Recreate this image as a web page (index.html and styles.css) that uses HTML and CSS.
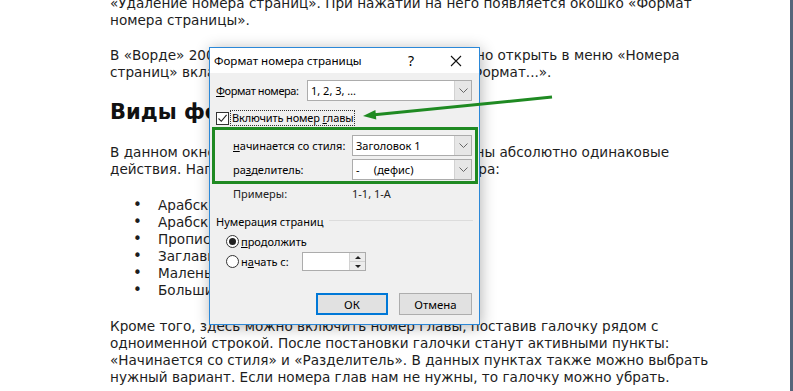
FILE: index.html
```html
<!DOCTYPE html>
<html lang="ru">
<head>
  <meta charset="UTF-8" />
  <title>Формат номера страницы</title>
  <link rel="stylesheet" href="styles.css">
</head>
<body>

  <!-- Текст статьи -->
  <div class="window">
    <main class="article">
      <p class="first">«Удаление номера страниц». При нажатии на него появляется окошко «Формат<br>номера страницы».</p>
      <p>В «Ворде» 2007 и 2010 это окно точно так же можно открыть в меню «Номера<br>страниц» вкладки «Вставка», выбрав там пункт «Формат...».</p>
      <h2>Виды форматов</h2>
      <p>В данном окне для всех форматов нумерации нужны абсолютно одинаковые<br>действия. Например, можно задать форматы номера:</p>
      <ul>
        <li>Арабские цифры (1, 2, 3...)</li>
        <li>Арабские цифры с дефисом</li>
        <li>Прописные буквы</li>
        <li>Заглавные буквы</li>
        <li>Маленькие римские цифры</li>
        <li>Большие римские цифры</li>
      </ul>
      <p>Кроме того, здесь можно включить номер главы, поставив галочку рядом с<br>одноименной строкой. После постановки галочки станут активными пункты:<br>«Начинается со стиля» и «Разделитель». В данных пунктах также можно выбрать<br>нужный вариант. Если номера глав нам не нужны, то галочку можно убрать.</p>
    </main>
    <div class="frame-edge"></div>
  </div>

  <!-- Окно диалога -->
  <div class="dialog">
    <div class="dlg-title">
      <span class="dlg-caption">Формат номера страницы</span>
      <span class="dlg-help">?</span>
      <span class="dlg-close">
        <svg width="12" height="12" viewBox="0 0 12 12"><path d="M1 1L11 11M11 1L1 11" stroke="#111" stroke-width="1.1" fill="none"/></svg>
      </span>
    </div>

    <div class="dlg-body">
      <div class="format-row">
        <span class="format-label"><u>Ф</u>ормат номера:</span>
        <div class="combo combo-wide">
          <span class="combo-text">1, 2, 3, …</span>
          <span class="combo-btn"><svg width="9" height="5" viewBox="0 0 9 5"><path d="M0.5 0.5L4.5 4.5L8.5 0.5" stroke="#666" fill="none"/></svg></span>
        </div>
      </div>

      <div class="check-row">
        <span class="checkbox">
          <svg width="11" height="11" viewBox="0 0 11 11"><path d="M1.5 5.5L4.3 8.3L9.6 1.8" stroke="#222" stroke-width="1.1" fill="none"/></svg>
        </span>
        <span class="focus-label">Включить номер <u>г</u>лавы</span>
      </div>

      <div class="chapter-box">
        <div class="pair-row">
          <span class="pair-label"><u>н</u>ачинается со стиля:</span>
          <div class="combo">
            <span class="combo-text">Заголовок 1</span>
            <span class="combo-btn"><svg width="9" height="5" viewBox="0 0 9 5"><path d="M0.5 0.5L4.5 4.5L8.5 0.5" stroke="#666" fill="none"/></svg></span>
          </div>
        </div>
        <div class="pair-row">
          <span class="pair-label">ра<u>з</u>делитель:</span>
          <div class="combo">
            <span class="combo-text">-&nbsp;&nbsp;&nbsp;&nbsp;&nbsp;(дефис)</span>
            <span class="combo-btn"><svg width="9" height="5" viewBox="0 0 9 5"><path d="M0.5 0.5L4.5 4.5L8.5 0.5" stroke="#666" fill="none"/></svg></span>
          </div>
        </div>
      </div>

      <div class="examples">
        <span class="pair-label">Примеры:</span>
        <span>1-1, 1-A</span>
      </div>

      <div class="group-title"><span>Нумерация страниц</span></div>

      <div class="radio-row">
        <span class="radio checked"></span>
        <span><u>п</u>родолжить</span>
      </div>
      <div class="radio-row start-row">
        <span class="radio"></span>
        <span class="start-label">н<u>а</u>чать с:</span>
        <div class="spin">
          <span class="spin-field"></span>
          <span class="spin-btns">
            <span class="spin-up"></span>
            <span class="spin-down"></span>
          </span>
        </div>
      </div>

      <div class="buttons">
        <button class="btn btn-default">ОК</button>
        <button class="btn">Отмена</button>
      </div>
    </div>
  </div>

  <!-- Зелёная стрелка-указатель -->
  <svg class="arrow" width="793" height="391" viewBox="0 0 793 391">
    <line x1="552" y1="97" x2="372" y2="115" stroke="#1f8a22" stroke-width="3"/>
    <polygon points="363,116 376.3,119.5 375.4,110" fill="#1f8a22"/>
  </svg>

</body>
</html>
```

FILE: styles.css
```css
/* Общие стили */
* {
  margin: 0;
  padding: 0;
  box-sizing: border-box;
}

body {
  width: 793px;
  height: 391px;
  overflow: hidden;
  background: #fff;
  position: relative;
  font-family: "DejaVu Sans", Verdana, sans-serif;
  color: #1d1d1d;
}

/* Окно с текстом статьи */
.window {
  display: flex;
  height: 391px;
}

.article {
  flex: 1;
  padding-left: 110px;
  font-size: 13.6px;
  line-height: 17px;
  white-space: nowrap;
  overflow: hidden;
}

.article p {
  margin-bottom: 18px;
}

.article p.first {
  margin-top: -5px;
}

.article h2 {
  font-size: 21px;
  line-height: 26px;
  font-weight: bold;
  color: #111;
  margin-top: 1px;
  margin-bottom: 19px;
}

.article h2 + p {
  margin-bottom: 19px;
}

.article ul {
  list-style: none;
  padding-left: 48px;
  margin-bottom: 19px;
}

.article li::before {
  content: "•";
  display: inline-block;
  width: 25px;
  margin-left: -25px;
  font-size: 15px;
}

.frame-edge {
  width: 3px;
  background: #56657a;
}

/* Диалог «Формат номера страницы» */
.dialog {
  position: absolute;
  left: 209px;
  top: 47px;
  width: 271px;
  border: 1px solid #2b88d8;
  background: #f0f0f0;
  box-shadow: 1px 2px 14px rgba(0, 0, 0, 0.3);
  font-family: "Noto Sans", "Open Sans", sans-serif;
  font-size: 11px;
  color: #000;
  white-space: nowrap;
}

.dlg-title {
  display: flex;
  align-items: center;
  height: 25px;
  background: #fff;
  padding-left: 4px;
}

.dlg-caption {
  flex: 1;
  font-size: 11.6px;
}

.dlg-help {
  width: 20px;
  margin-right: 11px;
  text-align: center;
  font-size: 14px;
}

.dlg-close {
  width: 47px;
  display: flex;
  justify-content: center;
}

.dlg-body {
  padding: 7px 6px 9px 6px;
}

u {
  text-decoration: underline;
  text-underline-offset: 1px;
}

/* Выпадающие списки */
.format-row {
  display: flex;
  align-items: center;
  height: 21px;
}

.format-label {
  width: 91px;
  letter-spacing: -0.4px;
}

.combo {
  width: 120px;
  height: 21px;
  display: flex;
  align-items: center;
  background: #fff;
  border: 1px solid #acacac;
}

.combo-wide {
  width: 165px;
}

.combo-text {
  flex: 1;
  padding-left: 3px;
}

.combo-btn {
  width: 17px;
  height: 19px;
  display: flex;
  align-items: center;
  justify-content: center;
  background: #e6e6e6;
  border-left: 1px solid #d2d2d2;
}

/* Флажок */
.check-row {
  display: flex;
  align-items: center;
  height: 16px;
  margin-top: 9px;
}

.checkbox {
  width: 13px;
  height: 13px;
  border: 1px solid #333;
  background: #fff;
  display: flex;
  align-items: center;
  justify-content: center;
}

.focus-label {
  margin-left: 1px;
  padding: 0 1px;
  line-height: 14px;
  letter-spacing: -0.15px;
  border: 1px dotted #333;
}

/* Зелёная рамка-выделение */
.chapter-box {
  margin: 1px -5px 0 -4px;
  border: 3px solid #1f8a22;
  padding: 5px 2px 1px 18px;
  display: flex;
  flex-direction: column;
  gap: 3px;
}

.pair-row {
  display: flex;
  align-items: center;
}

.pair-label {
  width: 119px;
}

.examples {
  display: flex;
  align-items: center;
  height: 16px;
  margin: 1px 0 0 17px;
  color: #222;
}

/* Группа «Нумерация страниц» */
.group-title {
  display: flex;
  align-items: center;
  height: 16px;
  margin-top: 12px;
}

.group-title::after {
  content: "";
  flex: 1;
  height: 1px;
  margin-left: 5px;
  margin-top: -1px;
  background: #dcdcdc;
}

.radio-row {
  display: flex;
  align-items: center;
  height: 16px;
  margin-top: 4px;
  padding-left: 10px;
}

.start-row {
  height: 19px;
  margin-top: 3px;
}

.radio {
  width: 13px;
  height: 13px;
  border: 1px solid #333;
  border-radius: 50%;
  background: #fff;
  margin-right: 2px;
  display: flex;
  align-items: center;
  justify-content: center;
}

.radio.checked::after {
  content: "";
  width: 7px;
  height: 7px;
  border-radius: 50%;
  background: #222;
}

.start-label {
  width: 61px;
}

.spin {
  width: 64px;
  height: 19px;
  display: flex;
  border: 1px solid #acacac;
  background: #fff;
}

.spin-field {
  flex: 1;
}

.spin-btns {
  width: 16px;
  display: flex;
  flex-direction: column;
  border-left: 1px solid #d2d2d2;
  background: #ececec;
}

.spin-up,
.spin-down {
  flex: 1;
  display: flex;
  align-items: center;
  justify-content: center;
}

.spin-up {
  border-bottom: 1px solid #d2d2d2;
}

.spin-up::after {
  content: "";
  border: 3px solid transparent;
  border-bottom: 3px solid #222;
  border-top: 0;
}

.spin-down::after {
  content: "";
  border: 3px solid transparent;
  border-top: 3px solid #222;
  border-bottom: 0;
}

/* Кнопки */
.buttons {
  display: flex;
  justify-content: flex-end;
  gap: 11px;
  margin-top: 22px;
  padding-right: 1px;
}

.btn {
  width: 73px;
  height: 22px;
  font-family: "Noto Sans", "Open Sans", sans-serif;
  font-size: 11.4px;
  color: #000;
  background: #e1e1e1;
  border: 1px solid #adadad;
}

.btn-default {
  width: 72px;
  border: 2px solid #0078d7;
}

/* Стрелка поверх всего */
.arrow {
  position: absolute;
  left: 0;
  top: 0;
  pointer-events: none;
}
```
